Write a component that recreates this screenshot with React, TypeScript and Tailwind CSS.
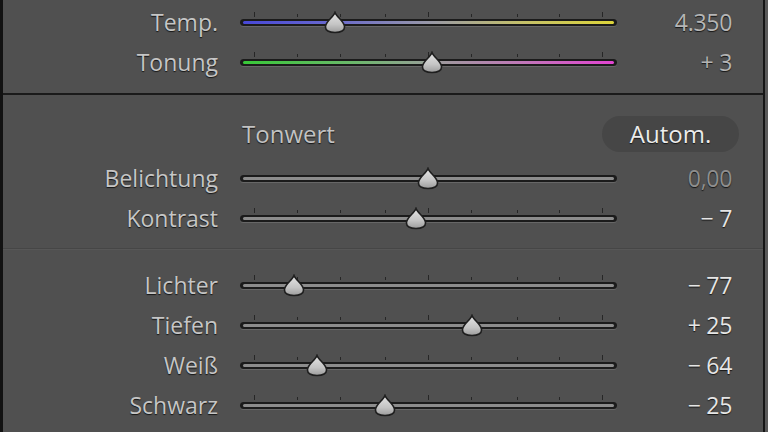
import React from "react";

type SliderProps = {
  pos: number;
  ticks?: boolean;
  fill?: string;
};

const TICKS = [14, 57, 100, 145, 188, 231, 277, 319, 362];
const TALL = [0, 4, 8];

function Thumb({ left }: { left: number }) {
  return (
    <svg
      width="22"
      height="23"
      viewBox="0 0 22 23"
      className="absolute top-[9px]"
      style={{ left: left - 11 }}
    >
      <defs>
        <linearGradient id="tg" x1="0" y1="0" x2="0" y2="1">
          <stop offset="0" stopColor="#e4e4e4" />
          <stop offset="0.6" stopColor="#c4c4c4" />
          <stop offset="1" stopColor="#9c9c9c" />
        </linearGradient>
      </defs>
      <path
        d="M11 1.5 C12.5 6 20 10 20.5 15.5 C20.8 19.5 17 21.5 11 21.5 C5 21.5 1.2 19.5 1.5 15.5 C2 10 9.5 6 11 1.5 Z"
        fill="url(#tg)"
        stroke="#1e1e1e"
        strokeWidth="1.6"
      />
    </svg>
  );
}

function Slider({ pos, ticks = true, fill }: SliderProps) {
  return (
    <div className="relative w-[377px] h-[40px] shrink-0">
      {ticks &&
        TICKS.map((x, i) => (
          <div
            key={i}
            className={
              TALL.includes(i)
                ? "absolute top-[10px] w-[1px] h-[5px] bg-[#262626]"
                : "absolute top-[12px] w-[1px] h-[3px] bg-[#262626]"
            }
            style={{ left: x }}
          />
        ))}
      <div className="absolute left-0 right-0 top-[17px] h-[7px] rounded-full bg-[#1b1b1b] shadow-[0_1px_0_#676767]">
        <div
          className="absolute left-[3px] right-[3px] top-[2px] h-[3px] rounded-full bg-[#8c8c8c]"
          style={fill ? { background: fill } : undefined}
        />
      </div>
      <Thumb left={pos} />
    </div>
  );
}

type RowProps = {
  label: string;
  value: string;
  valueColor: string;
  pos: number;
  ticks?: boolean;
  fill?: string;
};

function Row({ label, value, valueColor, pos, ticks, fill }: RowProps) {
  return (
    <div className="flex items-center h-[40px] shrink-0">
      <div className="w-[215px] text-right text-[23px] font-medium leading-none text-[#c6c6c6] [text-shadow:0_1px_1px_#151515]">
        {label}
      </div>
      <div className="w-[22px] shrink-0" />
      <Slider pos={pos} ticks={ticks} fill={fill} />
      <div
        className="w-[115px] text-right text-[23px] font-medium leading-none tracking-[-0.3px] [text-shadow:0_1px_1px_#151515]"
        style={{ color: valueColor }}
      >
        {value}
      </div>
    </div>
  );
}

export default function App() {
  const tempFill =
    "linear-gradient(to right, #4848d8 0%, #6a6acc 25%, #9898a8 50%, #c4c06a 75%, #dcd43a 100%)";
  const tonFill =
    "linear-gradient(to right, #38c838 0%, #6cb86c 30%, #9c9c9c 52%, #c078b8 75%, #e244d2 100%)";
  return (
    <div
      className="w-[768px] h-[432px] overflow-hidden bg-[#555555] flex"
      style={{ fontFamily: '"Open Sans", "Noto Sans", sans-serif' }}
    >
      <div className="w-[763px] h-full bg-[#505050] border-l-[3px] border-[#121212] flex flex-col">
        <div className="flex flex-col pt-[2px] h-[93px] shrink-0">
          <Row label="Temp." value="4.350" valueColor="#b6b6b6" pos={95} fill={tempFill} />
          <Row label="Tonung" value="+ 3" valueColor="#b4b4b4" pos={192} fill={tonFill} />
        </div>
        <div className="h-[2px] bg-[#1a1a1a] shrink-0" />
        <div className="flex flex-col">
          <div className="flex items-center h-[40px] mt-[19px] shrink-0">
            <div className="w-[239px] shrink-0" />
            <div className="flex-1 text-[24px] font-medium leading-none text-[#c2c2c2] [text-shadow:0_1px_1px_#151515]">
              Tonwert
            </div>
            <div className="w-[137px] h-[36px] mr-[24px] rounded-full bg-[#464646] flex items-center justify-center text-[24px] font-medium leading-none text-[#ececec] [text-shadow:0_1px_1px_#151515]">
              Autom.
            </div>
          </div>
          <div className="h-[4px] shrink-0" />
          <Row label="Belichtung" value="0,00" valueColor="#8e8e8e" pos={188} ticks={false} />
          <Row label="Kontrast" value="− 7" valueColor="#e6e6e6" pos={176} />
          <div className="h-[10px] shrink-0" />
          <div className="h-[1px] bg-[#464646] shrink-0" />
          <div className="h-[1px] bg-[#575757] shrink-0" />
          <div className="h-[15px] shrink-0" />
          <Row label="Lichter" value="− 77" valueColor="#e6e6e6" pos={54} />
          <Row label="Tiefen" value="+ 25" valueColor="#e6e6e6" pos={232} />
          <Row label="Weiß" value="− 64" valueColor="#e6e6e6" pos={77} />
          <Row label="Schwarz" value="− 25" valueColor="#e6e6e6" pos={145} />
        </div>
      </div>
      <div className="w-[2px] h-full bg-[#161616] shrink-0" />
      <div className="flex-1 h-full bg-[#595959]" />
    </div>
  );
}
